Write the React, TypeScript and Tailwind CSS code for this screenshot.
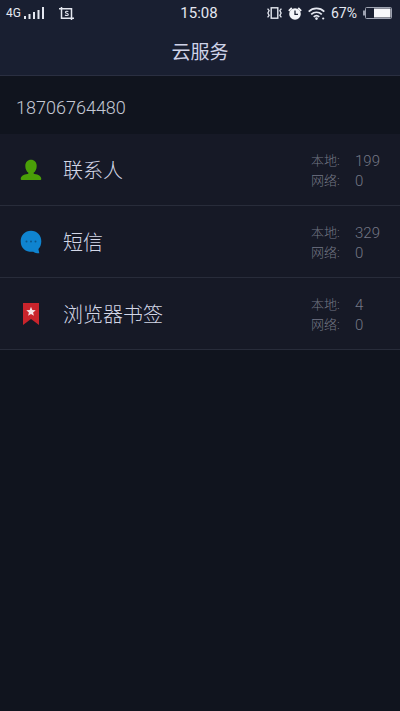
import React from "react";

type Service = {
  name: string;
  local: number;
  network: number;
  icon: React.ReactNode;
};

function ContactIcon() {
  return (
    <svg viewBox="0 0 22 22" className="size-[22px]" aria-hidden="true">
      <path
        fill="#4a9f08"
        d="M11 .8c3.300 0 5.700 2.500 5.700 6.100 0 3-1.300 5.600-3.100 6.900v.4c0 .5.400.8 1 .9 3.700.5 6.500 1.900 6.700 4.900 0 .6-.4.900-1 .900H1.700c-.6 0-1-.3-1-.9.2-3 3-4.400 6.700-4.900.6-.1 1-.4 1-.9v-.4C6.600 12.500 5.300 9.900 5.300 6.900 5.300 3.300 7.700.8 11 .8z"
      />
    </svg>
  );
}

function MessageIcon() {
  return (
    <svg viewBox="0 0 22 24" className="h-6 w-[22px]" aria-hidden="true">
      <path
        fill="#0f84d0"
        d="M11 .8c6 0 10.300 4.200 10.300 10.400 0 3.200-1 5.900-2.900 7.900l.9 4.200c-2.200.1-4.400-.5-6.100-1.600C6.500 22.200.7 19 .7 11.200.7 5 5 .8 11 .8z"
      />
      <circle cx="6.500" cy="11.500" r="1" fill="#0b568c" />
      <circle cx="11" cy="11.500" r="1" fill="#0b568c" />
      <circle cx="15.500" cy="11.500" r="1" fill="#0b568c" />
    </svg>
  );
}

function BookmarkIcon() {
  return (
    <svg viewBox="0 0 16 22" className="h-[22px] w-4" aria-hidden="true">
      <path fill="#c9242c" d="M0 0h16v22l-8-6L0 22z" />
      <path
        fill="#f4e4e8"
        d="M8 3.800l1.300 3.100 3.400.3-2.600 2.200.8 3.300L8 10.900l-2.900 1.800.8-3.300-2.600-2.200 3.400-.3z"
      />
    </svg>
  );
}

function SignalIcon() {
  return (
    <svg viewBox="0 0 21 13" className="h-[13px] w-[21px]" fill="#e4e7f0" aria-hidden="true">
      <rect x="0" y="9" width="2" height="3" />
      <rect x="4.500" y="7" width="2" height="5" />
      <rect x="9" y="5" width="2" height="7" />
      <rect x="13.500" y="3" width="2" height="9" />
      <rect x="18" y="0" width="2" height="12" />
    </svg>
  );
}

function ScreenshotIcon() {
  return (
    <svg viewBox="0 0 15 13" className="h-[13px] w-[15px]" fill="none" stroke="#e4e7f0" aria-hidden="true">
      <path strokeWidth="1.500" d="M0 1.800h12.500V13M2.500 0v11.200H15" />
      <path
        strokeWidth="1.100"
        d="M9.300 4.700c-.5-.7-2.900-.8-2.900.5 0 1.400 2.900.8 2.900 2.300 0 1.400-2.600 1.300-3.200.4"
      />
    </svg>
  );
}

function VibrateIcon() {
  return (
    <svg viewBox="0 0 15 12" className="h-3 w-[15px]" fill="none" stroke="#e4e7f0" aria-hidden="true">
      <rect x="4.200" y=".8" width="6.600" height="10.400" strokeWidth="1.400" />
      <path
        strokeWidth="1.300"
        d="M.6 1.600l1.500 2L.9 6l1.200 2.400-1.500 2M14.400 1.600l-1.500 2L14.100 6l-1.200 2.400 1.500 2"
      />
    </svg>
  );
}

function AlarmIcon() {
  return (
    <svg viewBox="0 0 14 13" className="h-[13px] w-[14px]" aria-hidden="true">
      <circle cx="7" cy="7" r="5.800" fill="#f1f3f8" />
      <path d="M.8 3.800L3.800 1M13.200 3.800L10.200 1" stroke="#f1f3f8" strokeWidth="1.800" />
      <path d="M7 3.600v3.800h3" fill="none" stroke="#191f31" strokeWidth="1.300" />
    </svg>
  );
}

function WifiIcon() {
  return (
    <svg viewBox="0 0 17 13" className="h-[13px] w-[17px]" fill="none" stroke="#e4e7f0" aria-hidden="true">
      <path
        strokeWidth="1.700"
        d="M.7 4.600c4.300-4.300 11.300-4.300 15.600 0M3.200 7.400c3-2.900 7.600-2.900 10.600 0M5.700 9.900c1.600-1.500 4-1.500 5.600 0"
      />
      <circle cx="8.500" cy="11.600" r="1.300" fill="#e4e7f0" stroke="none" />
      <circle cx="15.200" cy="11.500" r="1.100" fill="#e4e7f0" stroke="none" />
    </svg>
  );
}

function BatteryIcon() {
  return (
    <svg viewBox="0 0 29 12" className="h-3 w-[29px]" aria-hidden="true">
      <rect x="0" y="3.500" width="2" height="5" fill="#9ea3b1" />
      <rect x="2.500" y=".5" width="26" height="11" rx="1" fill="none" stroke="#9ea3b1" />
      <rect x="11" y="1.500" width="16.500" height="9" fill="#f7f8fb" />
    </svg>
  );
}

const services: Service[] = [
  { name: "联系人", local: 199, network: 0, icon: <ContactIcon /> },
  { name: "短信", local: 329, network: 0, icon: <MessageIcon /> },
  { name: "浏览器书签", local: 4, network: 0, icon: <BookmarkIcon /> },
];

function StatusBar() {
  return (
    <div className="grid h-[26px] grid-cols-[1fr_auto_1fr] items-center pr-2 pl-[6px] text-[#e4e7f0]">
      <div className="flex items-center">
        <span className="text-xs leading-4">4G</span>
        <span className="ml-[3px]">
          <SignalIcon />
        </span>
        <span className="ml-[14px]">
          <ScreenshotIcon />
        </span>
      </div>
      <span className="text-[15px] leading-4">15:08</span>
      <div className="flex items-center justify-end gap-[6px]">
        <VibrateIcon />
        <AlarmIcon />
        <WifiIcon />
        <span className="text-sm leading-4">67%</span>
        <BatteryIcon />
      </div>
    </div>
  );
}

function ServiceRow({ name, local, network, icon }: Service) {
  return (
    <li className="border-b border-[#282c3a]">
      <button type="button" className="flex h-[71px] w-full items-center pl-5 text-left">
        <span className="flex w-[22px] justify-center">{icon}</span>
        <span className="ml-[21px] flex-1 pt-[3px] text-xl font-light text-[#d3d7e7]">{name}</span>
        <span className="grid w-[89px] grid-cols-[44px_1fr] pt-[3px] text-[#747785]">
          <span className="text-[13px] leading-5 font-light">本地:</span>
          <span className="text-[15px] leading-5 font-light">{local}</span>
          <span className="text-[13px] leading-5 font-light">网络:</span>
          <span className="text-[15px] leading-5 font-light">{network}</span>
        </span>
      </button>
    </li>
  );
}

export default function App() {
  return (
    <div className="min-h-screen bg-[#10141e] font-['Roboto','Noto_Sans_CJK_SC',sans-serif]">
      <header className="border-b border-[#2a2f41] bg-[#191f31]">
        <StatusBar />
        <h1 className="flex h-[49px] items-center justify-center pt-[6px] text-[19px] text-[#cfd3e8]">云服务</h1>
      </header>
      <main>
        <p className="flex h-[58px] items-center px-4 pt-[6px] text-lg font-light text-[#c4c8d4]">18706764480</p>
        <ul className="bg-[#161926]">
          {services.map((service) => (
            <ServiceRow key={service.name} {...service} />
          ))}
        </ul>
      </main>
    </div>
  );
}
